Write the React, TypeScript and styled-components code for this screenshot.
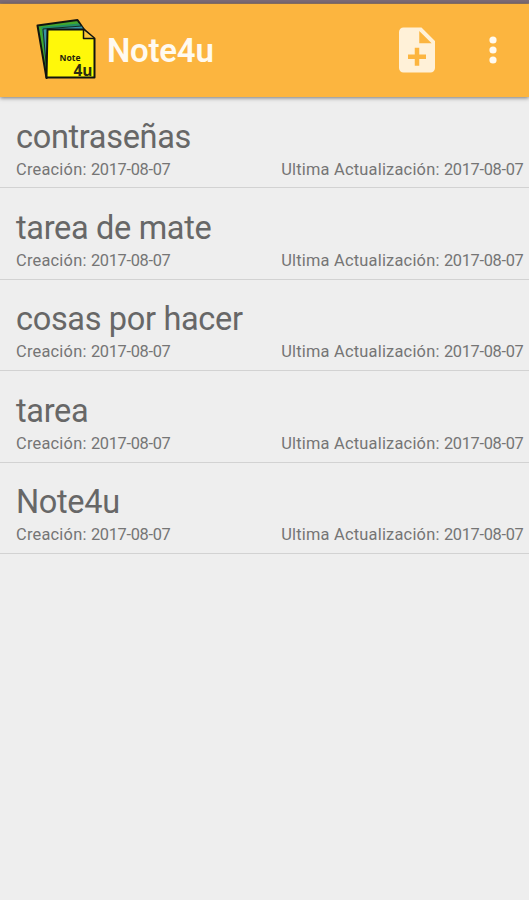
import React from 'react';
import styled, { createGlobalStyle } from 'styled-components';

const GlobalStyle = createGlobalStyle`
  * { box-sizing: border-box; }
  html, body { margin: 0; padding: 0; background: #eeeeee; }
  body { font-family: Roboto, sans-serif; color: #6b6b6b; overflow: hidden; }
`;

const Screen = styled.div`
  display: flex;
  flex-direction: column;
  width: 529px;
  height: 900px;
  background: #eeeeee;
`;

const StatusStrip = styled.div`
  flex: none;
  height: 4px;
  background: linear-gradient(#7c6b75 0 75%, #b38a5e);
`;

const Toolbar = styled.header`
  flex: none;
  display: flex;
  align-items: flex-start;
  height: 93px;
  padding-left: 35px;
  background: #fcb53f;
  box-shadow: 0 1px 4px rgba(0, 0, 0, 0.5);
`;

const Logo = styled.svg`
  flex: none;
  width: 64px;
  height: 64px;
  margin-top: 13px;
`;

const AppTitle = styled.h1`
  flex: 1;
  margin: 26px 0 0 8px;
  font-size: 33px;
  line-height: 42px;
  font-weight: 600;
  letter-spacing: -0.25px;
  color: #fffaf0;
`;

const ToolButton = styled.button<{ $width: number }>`
  flex: none;
  display: flex;
  justify-content: center;
  width: ${(p) => p.$width}px;
  height: 54px;
  margin-top: 19px;
  padding: 0;
  border: 0;
  background: none;
  color: #fff1d8;
`;

const NoteList = styled.ul`
  margin: 0;
  padding: 0;
  list-style: none;
`;

const NoteRow = styled.li`
  height: 91.4px;
  padding: 19px 5.5px 0 16px;
  border-bottom: 1px solid #d2d2d2;
`;

const NoteTitle = styled.h2`
  margin: 0;
  padding-top: 0.5px;
  font-size: 32.5px;
  line-height: 40px;
  font-weight: 400;
  letter-spacing: -0.33px;
  color: #676767;
`;

const NoteDates = styled.div`
  display: flex;
  justify-content: space-between;
  margin-top: 3px;
  font-size: 16.4px;
  line-height: 20px;
  letter-spacing: 0.22px;
  color: #757575;
  white-space: nowrap;
`;

const DateValue = styled.time`
  letter-spacing: -0.32px;
`;

const notes = ['contraseñas', 'tarea de mate', 'cosas por hacer', 'tarea', 'Note4u'];

const NotesLogo = () => (
  <Logo viewBox="35 17 64 64" aria-label="Note4u">
    <g stroke="#10140f" strokeWidth="2" strokeLinejoin="round">
      <path d="M37.5 25.5 77.5 20l7.500 11-38.500 47Z" fill="#43a82c" />
      <path d="M41.500 27 79 23.500l4 6-36 46Z" fill="#238f65" stroke="none" />
      <path d="M43 29 82 26l2 4-37 44Z" fill="#3992a5" strokeWidth="0.8" />
      <path d="M47.5 29.5H84L94.5 38.5V77.5H46.5Z" fill="#fff80a" />
      <path d="M83.500 30V38.500H94" fill="#fcc83b" strokeWidth="1.500" />
    </g>
    <text x="59.5" y="61" fontFamily="Open Sans, sans-serif" fontWeight="700" fontSize="8.5" textLength="21" fill="#25250c">Note</text>
    <text x="73.5" y="76" fontFamily="Open Sans, sans-serif" fontWeight="700" fontSize="16" textLength="19" lengthAdjust="spacingAndGlyphs" fill="#2d2d10">4u</text>
  </Logo>
);

export default function App() {
  return (
    <>
      <GlobalStyle />
      <Screen>
        <StatusStrip />
        <Toolbar>
          <NotesLogo />
          <AppTitle>Note4u</AppTitle>
          <ToolButton $width={80} aria-label="Nueva nota">
            <svg width="54" height="54" viewBox="0 0 24 24" fill="currentColor">
              <path d="M14 2H6c-1.1 0-1.99.9-1.99 2L4 20c0 1.1.89 2 1.99 2H18c1.1 0 2-.9 2-2V8l-6-6zm2 14h-3v3h-2v-3H8v-2h3v-3h2v3h3v2zm-3-7V3.5L18.5 9H13z" />
            </svg>
          </ToolButton>
          <ToolButton $width={72} aria-label="Más opciones">
            <svg width="54" height="54" viewBox="0 0 54 54" fill="#fffaf0">
              <circle cx="27" cy="17" r="3.6" />
              <circle cx="27" cy="27" r="3.6" />
              <circle cx="27" cy="37" r="3.6" />
            </svg>
          </ToolButton>
        </Toolbar>
        <NoteList>
          {notes.map((title) => (
            <NoteRow key={title}>
              <NoteTitle>{title}</NoteTitle>
              <NoteDates>
                <span>Creación: <DateValue>2017-08-07</DateValue></span>
                <span>Ultima Actualización: <DateValue>2017-08-07</DateValue></span>
              </NoteDates>
            </NoteRow>
          ))}
        </NoteList>
      </Screen>
    </>
  );
}
